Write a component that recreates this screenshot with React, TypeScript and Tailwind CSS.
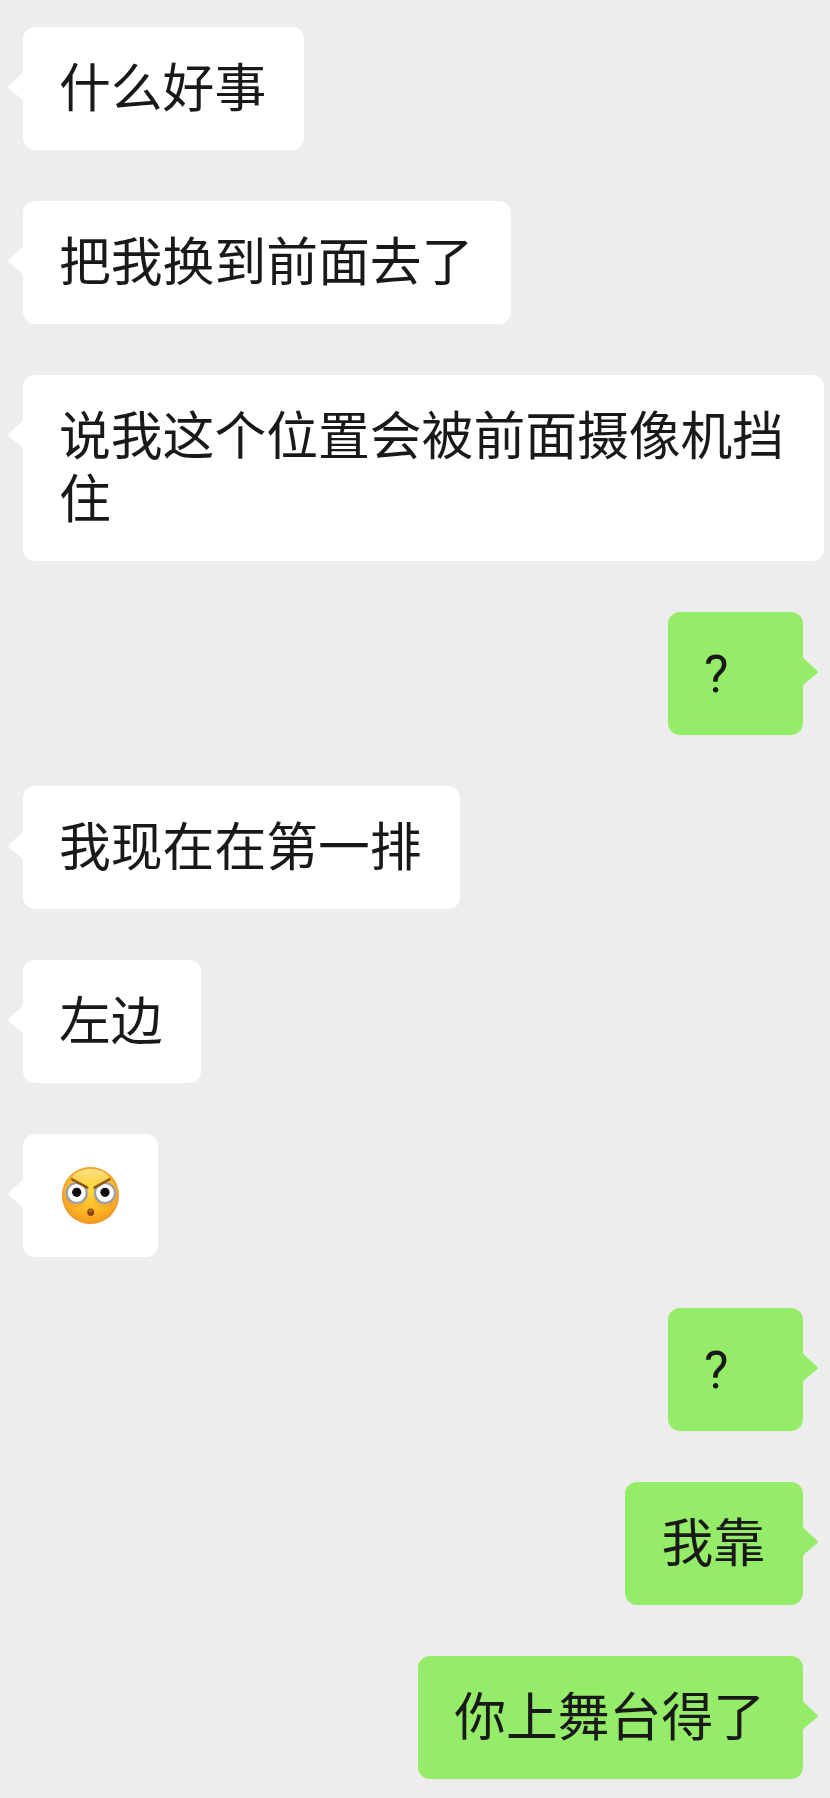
import React from "react";

type Msg = { side: "left" | "right"; text?: string; emoji?: boolean };

const messages: Msg[] = [
  { side: "left", text: "什么好事" },
  { side: "left", text: "把我换到前面去了" },
  { side: "left", text: "说我这个位置会被前面摄像机挡住" },
  { side: "right", text: "?" },
  { side: "left", text: "我现在在第一排" },
  { side: "left", text: "左边" },
  { side: "left", emoji: true },
  { side: "right", text: "?" },
  { side: "right", text: "我靠" },
  { side: "right", text: "你上舞台得了" },
];

// Small pointer on the bubble's edge, drawn pointing left and mirrored for sent messages.
function Tail({ side }: { side: "left" | "right" }) {
  const fill = side === "left" ? "#ffffff" : "#95ec69";
  const place = side === "left" ? "left-[-15px]" : "right-[-15px] -scale-x-100";
  return (
    <svg
      className={`absolute top-[41px] ${place}`}
      width="16"
      height="37"
      viewBox="0 0 16 37"
    >
      <path
        d="M16 0 C16 3 14.5 5 12.5 7 L1 17.5 Q-0.5 19 1 20.5 L12.5 30 C14.5 32 16 34 16 37 Z"
        fill={fill}
      />
    </svg>
  );
}

// Surprised face with a furrowed brow, as a chat emoji.
function GlareEmoji() {
  return (
    <svg width="57" height="57" viewBox="0 0 57 57" className="-mt-[2px] ml-[3px] block">
      <defs>
        <radialGradient id="skin" cx="50%" cy="38%" r="62%">
          <stop offset="0%" stopColor="#ffd93b" />
          <stop offset="62%" stopColor="#fdb928" />
          <stop offset="100%" stopColor="#f39a1c" />
        </radialGradient>
        <linearGradient id="sheen" x1="0" y1="0" x2="0" y2="1">
          <stop offset="0%" stopColor="#fff3a8" stopOpacity="0.75" />
          <stop offset="100%" stopColor="#fff3a8" stopOpacity="0" />
        </linearGradient>
      </defs>
      <circle cx="28.5" cy="28.5" r="28.5" fill="url(#skin)" />
      <circle cx="28.5" cy="28.5" r="27.7" fill="none" stroke="#ee8f3a" strokeWidth="1.2" opacity="0.7" />
      <ellipse cx="28.5" cy="11" rx="18" ry="9" fill="url(#sheen)" />
      <ellipse cx="14.5" cy="29" rx="11" ry="11" fill="#f0903a" opacity="0.35" />
      <ellipse cx="42.5" cy="29" rx="11" ry="11" fill="#f0903a" opacity="0.35" />
      <circle cx="14.7" cy="26" r="10" fill="#fff" stroke="#98a0ab" strokeWidth="2.2" />
      <circle cx="43" cy="26" r="10" fill="#fff" stroke="#98a0ab" strokeWidth="2.2" />
      <circle cx="14.7" cy="25.3" r="4.6" fill="#0c0c0c" />
      <circle cx="43" cy="25.3" r="4.6" fill="#0c0c0c" />
      <path d="M10 12.3 L25.3 20.6" stroke="#8f5410" strokeWidth="2.4" strokeLinecap="round" />
      <path d="M47.5 12.3 L32.5 20.6" stroke="#8f5410" strokeWidth="2.4" strokeLinecap="round" />
      <ellipse cx="28.7" cy="45.3" rx="3.4" ry="3.8" fill="#8a4410" />
      <ellipse cx="28.7" cy="43.8" rx="2" ry="1" fill="#c9782c" />
    </svg>
  );
}

function Bubble({ msg }: { msg: Msg }) {
  const tone = msg.side === "left" ? "bg-white" : "bg-[#95ec69]";
  return (
    <div
      className={`relative min-w-[135px] max-w-[801px] rounded-[12px] pb-[29px] pl-[36px] pr-[38px] pt-[31px] text-[51.8px] leading-[63px] text-[#191919] ${tone}`}
    >
      <Tail side={msg.side} />
      {msg.emoji ? (
        <div className="flex h-[63px] items-center">
          <GlareEmoji />
        </div>
      ) : (
        <p>{msg.text}</p>
      )}
    </div>
  );
}

export default function App() {
  return (
    <div
      className="flex min-h-[1798px] flex-col gap-[51px] bg-[#ededed] pt-[27px]"
      style={{ fontFamily: 'Roboto, "Noto Sans CJK SC", sans-serif' }}
    >
      {messages.map((msg, i) => (
        <div
          key={i}
          className={
            msg.side === "left"
              ? "flex justify-start pl-[23px]"
              : "flex justify-end pr-[27px]"
          }
        >
          <Bubble msg={msg} />
        </div>
      ))}
    </div>
  );
}
